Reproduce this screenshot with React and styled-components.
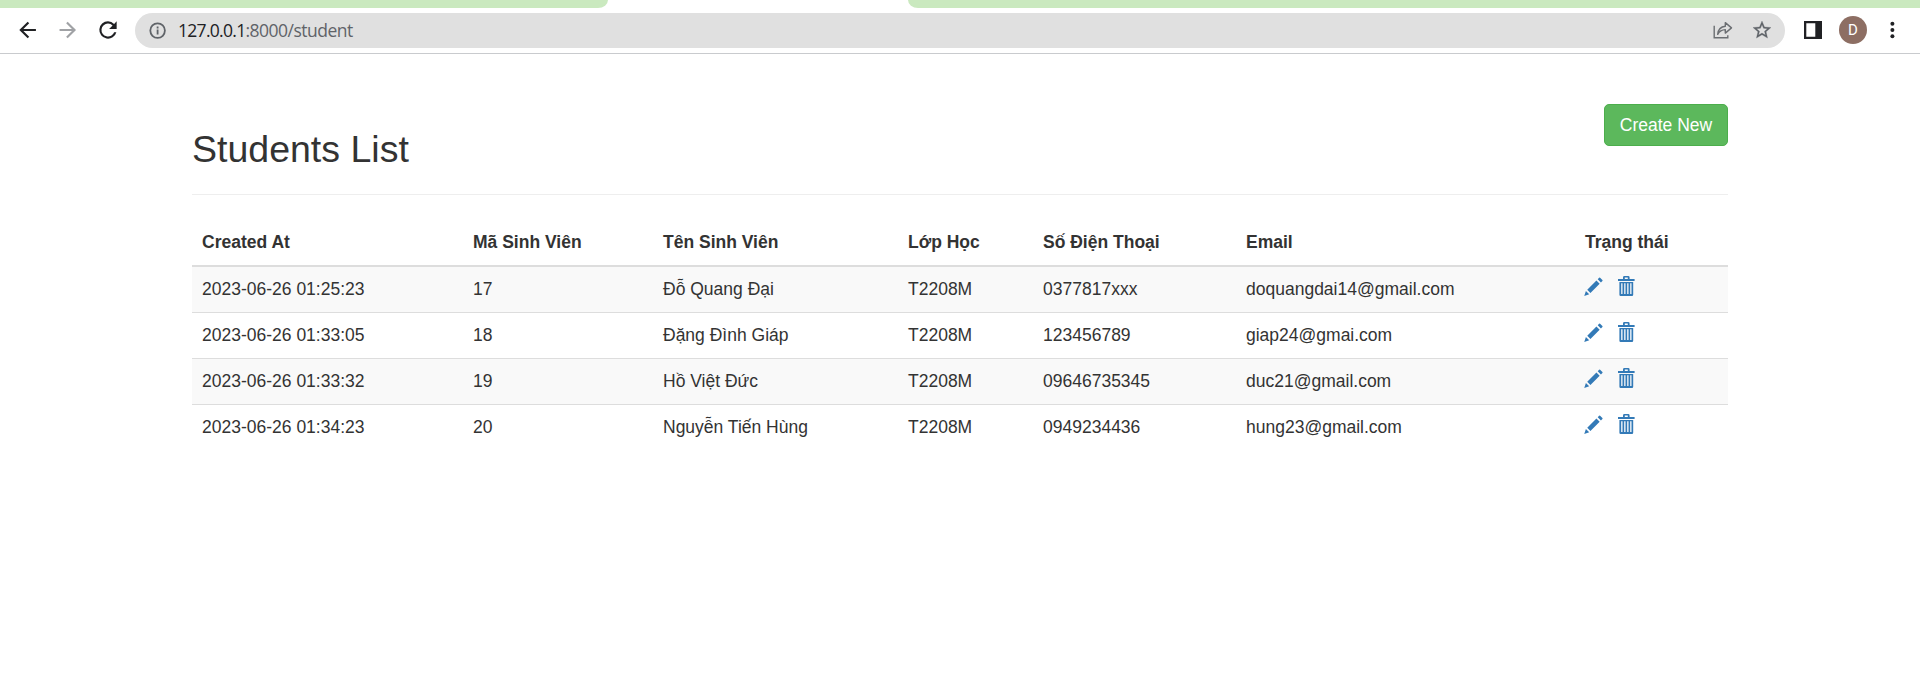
import React from "react";
import styled, { createGlobalStyle } from "styled-components";

const GlobalStyle = createGlobalStyle`
  * { box-sizing: border-box; }
  html, body { margin: 0; background: #fff; overflow: hidden; }
  body {
    color: #333;
    font-family: Arial, "Liberation Sans", sans-serif;
    font-size: 17.5px;
    line-height: 25px;
  }
`;

const Browser = styled.div`
  display: flex;
  flex-direction: column;
  height: 687px;
`;

const TabStrip = styled.div`
  display: flex;
  justify-content: space-between;
  height: 8px;
`;

const TabEdge = styled.div`
  width: ${(p) => p.$width}px;
  background: #cae9bf;
  border-radius: ${(p) => (p.$side === "left" ? "0 0 10px 0 / 0 0 8px 0" : "0 0 0 10px / 0 0 0 8px")};
`;

const Toolbar = styled.div`
  display: flex;
  align-items: center;
  height: 46px;
  padding: 0 16px 1px 15px;
  border-bottom: 1px solid #c9cbce;
`;

const NavButtons = styled.div`
  display: flex;
  gap: 14px;
  width: 120px;
`;

const Icon = styled.svg`
  display: block;
  flex: none;
  overflow: visible;
`;

const AddressBar = styled.div`
  display: flex;
  align-items: center;
  width: 1650px;
  height: 35px;
  padding: 0 14px 0 14px;
  border-radius: 18px;
  background: #e0e0e0;
`;

const Address = styled.div`
  flex: 1;
  margin-left: 12px;
  font-family: "Open Sans", "Noto Sans", sans-serif;
  font-size: 17.5px;
  line-height: 24px;
  color: #5f6368;
  white-space: nowrap;
  letter-spacing: -0.52px;
`;

const Host = styled.span`
  color: #202124;
  letter-spacing: -0.7px;
`;

const PillActions = styled.div`
  display: flex;
  gap: 20px;
`;

const BrowserActions = styled.div`
  display: flex;
  flex: 1;
  align-items: center;
  justify-content: flex-end;
`;

const Avatar = styled.div`
  width: 28px;
  height: 28px;
  margin: 0 13px 0 17px;
  border-radius: 50%;
  background: #8d6e63;
  color: #fff;
  font: 15px/28px Roboto, sans-serif;
  text-align: center;
`;

const Page = styled.main`
  width: 1536px;
  margin: 50px auto 0;
`;

const PageHeader = styled.header`
  display: flex;
  align-items: flex-start;
  justify-content: space-between;
  height: 91px;
  border-bottom: 1px solid #eee;
`;

const Title = styled.h2`
  margin: 25px 0 0;
  font-size: 37.5px;
  font-weight: 400;
  line-height: 41px;
`;

const CreateButton = styled.button`
  width: 124px;
  height: 42px;
  padding: 0;
  border: 1px solid #4cae4c;
  border-radius: 5px;
  background: #5cb85c;
  color: #fff;
  font: inherit;
`;

const Table = styled.table`
  width: 100%;
  margin-top: 25px;
  table-layout: fixed;
  border-collapse: separate;
  border-spacing: 0;
`;

const HeadCell = styled.th`
  width: ${(p) => p.$width}px;
  height: 47px;
  padding: 10px;
  border-bottom: 2px solid #ddd;
  text-align: left;
  white-space: nowrap;
`;

const Row = styled.tr`
  &:nth-child(odd) { background: #f9f9f9; }
  & + & > td { border-top: 1px solid #ddd; }
`;

const Cell = styled.td`
  padding: 10px;
  white-space: nowrap;
`;

const RowActions = styled.div`
  display: flex;
  gap: 15px;
  height: 25px;
  margin: 0 0 0 -1px;
`;

const ActionLink = styled.a`
  display: block;
  height: 20px;
  margin-top: -1px;
  color: #337ab7;
`;

const Stroke = ({ size = 24, children, color = "#202124", width = 2 }) => (
  <Icon width={size} height={size} viewBox="0 0 24 24" fill="none" stroke={color} strokeWidth={width}>
    {children}
  </Icon>
);

const BackIcon = () => (
  <Stroke size={26}>
    <path d="M19.3 12H5.6M12.4 5l-7 7 7 7" />
  </Stroke>
);

const ForwardIcon = () => (
  <Stroke size={26} color="#a0a2a5">
    <path d="M4.2 12H17.8M11 5l7 7-7 7" />
  </Stroke>
);

const ReloadIcon = () => (
  <Icon width="26" height="26" viewBox="0 0 24 24" fill="#202124">
    <path d="M17.65 6.35A7.95 7.95 0 0 0 12 4a8 8 0 1 0 7.73 10h-2.08A6 6 0 1 1 12 6c1.66 0 3.14.69 4.22 1.78L13 11h7V4z" />
  </Icon>
);

const InfoIcon = () => (
  <Icon width="17" height="17" viewBox="0 0 17 17" fill="none" stroke="#5f6368" strokeWidth="1.8">
    <circle cx="8.6" cy="8.6" r="7.3" />
    <path d="M8.6 7.6v5M8.6 4.6v1.8" />
  </Icon>
);

const ShareIcon = () => (
  <Icon width="20" height="18" viewBox="0 0 20 18" fill="none" stroke="#6b6e72" strokeWidth="1.4">
    <path d="M1.2 4.8v12h13.6v-2.6" />
    <path d="M4.7 13.3c.5-5 3-7.5 7.6-8V1.6l6.2 5.3-6.2 5.2V8.6c-3.5.1-5.9 1.5-7.6 4.7z" strokeLinejoin="round" />
  </Icon>
);

const StarIcon = () => (
  <Icon width="18" height="18" viewBox="2 2 20 20" fill="#5f6368" stroke="#5f6368" strokeWidth=".3">
    <path d="m22 9.24-7.19-.62L12 2 9.19 8.63 2 9.24l5.46 4.73L5.82 21 12 17.27 18.18 21l-1.63-7.03zM12 15.4l-3.76 2.27 1-4.28-3.32-2.88 4.38-.38L12 6.1l1.71 4.04 4.38.38-3.32 2.88 1 4.28z" />
  </Icon>
);

const SidePanelIcon = () => (
  <Icon width="18" height="18" viewBox="0 0 18 18" fill="#202124">
    <path fillRule="evenodd" d="M0 0h18v18H0zM2.3 2.3v13.4h9V2.3z" />
  </Icon>
);

const MenuIcon = () => (
  <Icon width="24" height="18" viewBox="0 0 24 18" fill="#202124">
    <circle cx="12.4" cy="2.8" r="2" />
    <circle cx="12.4" cy="9" r="2" />
    <circle cx="12.4" cy="15.2" r="2" />
  </Icon>
);

const PencilIcon = () => (
  <Icon width="19" height="20" viewBox="0 0 19 20" fill="currentColor">
    <g transform="translate(.5 19.7) scale(.01495 -.01495)">
      <path d="M1011 1210q19 0 33-13l153-153q13-14 13-33t-13-33l-99-92-214 214 95 96q13 14 32 14zM1013 800 398 186 184 400l614 614zM317 96-16-16 94 319z" />
    </g>
  </Icon>
);

const TrashIcon = () => (
  <Icon width="17" height="20" viewBox="0 0 17 20" fill="currentColor">
    <path d="M5 3V1.4Q5 0 6.4 0h3.8q1.4 0 1.4 1.4V3H16.6v2H0V3zm1.8 0h3V1.5h-3z" fillRule="evenodd" />
    <path
      d="M1.4 6h13.8v12.8q0 1.2-1.2 1.2H2.6q-1.2 0-1.2-1.2zM3.2 7.2v10.9h1.3V7.2zm3 0v10.9h1.3V7.2zm3 0v10.9h1.3V7.2zm3 0v10.9h1.3V7.2z"
      fillRule="evenodd"
    />
  </Icon>
);

const columns = [
  ["Created At", 271],
  ["Mã Sinh Viên", 190],
  ["Tên Sinh Viên", 245],
  ["Lớp Học", 135],
  ["Số Điện Thoại", 203],
  ["Email", 339],
  ["Trạng thái", 153],
];

const students = [
  ["2023-06-26 01:25:23", "17", "Đỗ Quang Đại", "T2208M", "0377817xxx", "doquangdai14@gmail.com"],
  ["2023-06-26 01:33:05", "18", "Đặng Đình Giáp", "T2208M", "123456789", "giap24@gmai.com"],
  ["2023-06-26 01:33:32", "19", "Hồ Việt Đức", "T2208M", "09646735345", "duc21@gmail.com"],
  ["2023-06-26 01:34:23", "20", "Nguyễn Tiến Hùng", "T2208M", "0949234436", "hung23@gmail.com"],
];

export default function App() {
  return (
    <Browser>
      <GlobalStyle />
      <TabStrip>
        <TabEdge $side="left" $width={608} />
        <TabEdge $side="right" $width={1012} />
      </TabStrip>
      <Toolbar>
        <NavButtons>
          <BackIcon />
          <ForwardIcon />
          <ReloadIcon />
        </NavButtons>
        <AddressBar>
          <InfoIcon />
          <Address>
            <Host>127.0.0.1</Host>:8000/student
          </Address>
          <PillActions>
            <ShareIcon />
            <StarIcon />
          </PillActions>
        </AddressBar>
        <BrowserActions>
          <SidePanelIcon />
          <Avatar>D</Avatar>
          <MenuIcon />
        </BrowserActions>
      </Toolbar>
      <Page>
        <PageHeader>
          <Title>Students List</Title>
          <CreateButton>Create New</CreateButton>
        </PageHeader>
        <Table>
          <thead>
            <tr>
              {columns.map(([label, width]) => (
                <HeadCell key={label} $width={width}>{label}</HeadCell>
              ))}
            </tr>
          </thead>
          <tbody>
            {students.map((student) => (
              <Row key={student[1]}>
                {student.map((value, i) => (
                  <Cell key={i}>{value}</Cell>
                ))}
                <Cell>
                  <RowActions>
                    <ActionLink><PencilIcon /></ActionLink>
                    <ActionLink><TrashIcon /></ActionLink>
                  </RowActions>
                </Cell>
              </Row>
            ))}
          </tbody>
        </Table>
      </Page>
    </Browser>
  );
}
